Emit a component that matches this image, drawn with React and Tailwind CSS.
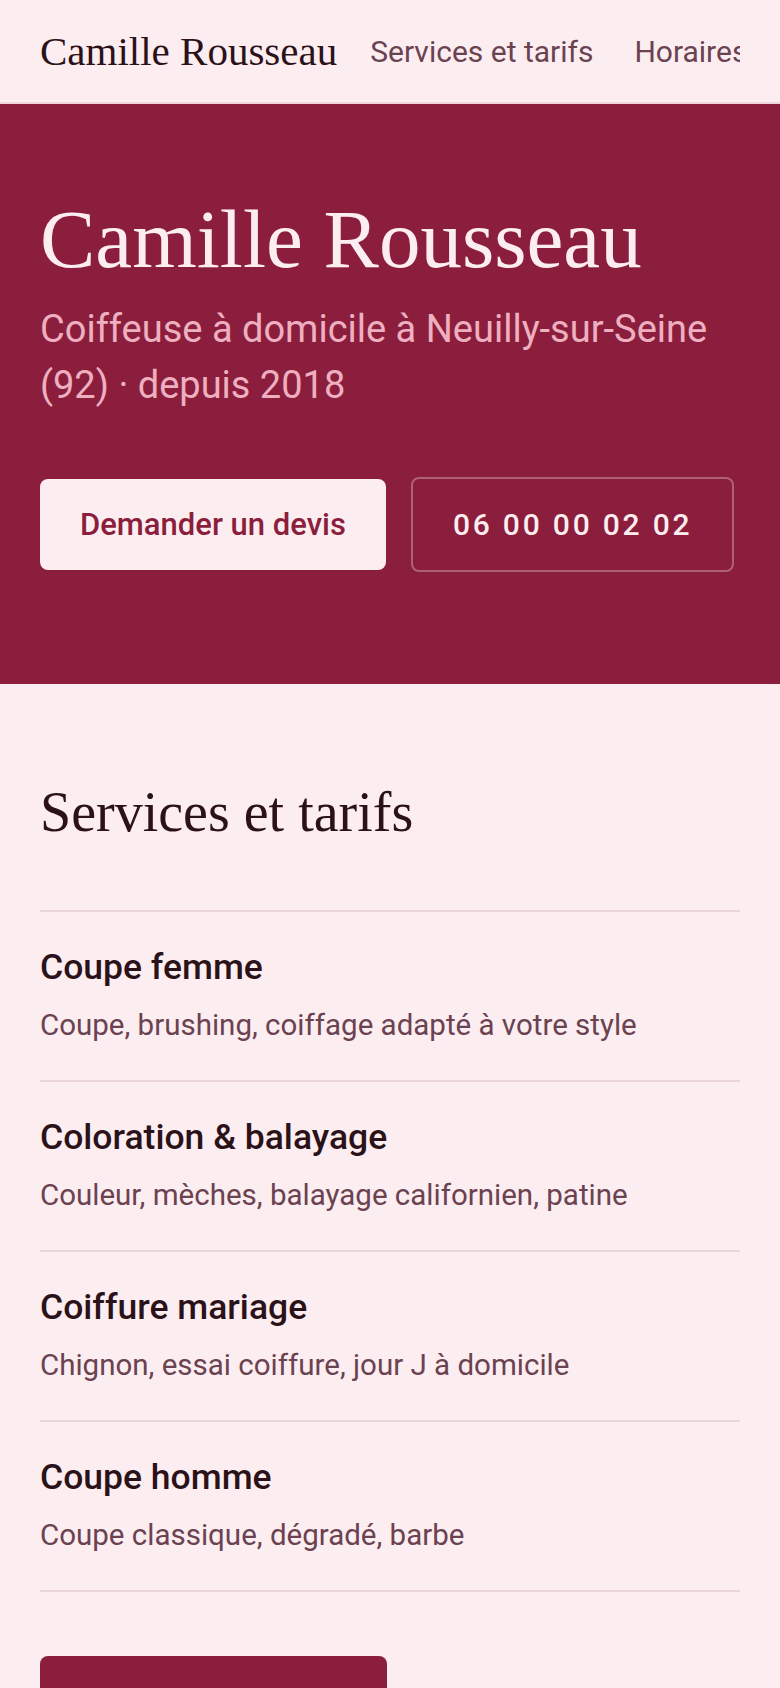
const services = [
  { title: 'Coupe femme', desc: 'Coupe, brushing, coiffage adapté à votre style' },
  { title: 'Coloration & balayage', desc: 'Couleur, mèches, balayage californien, patine' },
  { title: 'Coiffure mariage', desc: 'Chignon, essai coiffure, jour J à domicile' },
  { title: 'Coupe homme', desc: 'Coupe classique, dégradé, barbe' },
];

const serif = "font-['Liberation_Serif',serif]";

export default function App() {
  return (
    <div className="min-h-screen bg-[#fcedf0] font-['Roboto',sans-serif] text-[#2b1219]">
      <nav className="flex h-[104px] items-center gap-[33px] border-b-2 border-[#efd6dc] px-10">
        <span className={`${serif} shrink-0 text-[41px] leading-none text-[#2b1219]`}>
          Camille Rousseau
        </span>
        <div className="flex min-w-0 flex-1 gap-[41px] overflow-hidden whitespace-nowrap text-[30px] text-[#6b4250]">
          <a href="#services">Services et tarifs</a>
          <a href="#horaires">Horaires</a>
        </div>
      </nav>

      <header className="bg-[#8b1e3c] px-10 pt-[94px] pb-[112px]">
        <h1 className={`${serif} text-[83px] leading-none text-[#fcedf0]`}>Camille Rousseau</h1>
        <p className="mt-5 text-[38px] leading-[56px] text-[#eeb0c0]">
          Coiffeuse à domicile à Neuilly-sur-Seine (92) · depuis 2018
        </p>
        <div className="mt-16 flex items-center gap-[25px]">
          <a
            href="#devis"
            className="rounded-lg bg-[#fcedf0] px-10 py-[23px] text-[31px] leading-[45px] font-medium text-[#8b1e3c]"
          >
            Demander un devis
          </a>
          <a
            href="tel:0600000202"
            className="rounded-lg border-2 border-white/30 px-10 py-[23px] text-[30px] leading-[45px] font-medium tracking-[2.8px] text-[#fcedf0]"
          >
            06 00 00 02 02
          </a>
        </div>
      </header>

      <section id="services" className="px-10 pt-[95px] pb-24">
        <h2 className={`${serif} text-[56px] leading-[67px] text-[#2b1219]`}>Services et tarifs</h2>
        <ul className="mt-16 border-b-2 border-[#ecd5da]">
          {services.map((s) => (
            <li key={s.title} className="border-t-2 border-[#ecd5da] pt-[33px] pb-8">
              <h3 className="text-[35.5px] leading-[44px] font-medium text-[#2b1219]">{s.title}</h3>
              <p className="mt-[14px] text-[29.5px] leading-[45px] text-[#6b4250]">{s.desc}</p>
            </li>
          ))}
        </ul>
        <a
          href="#devis"
          className="mt-16 inline-block w-[347px] rounded-lg bg-[#8b1e3c] px-10 py-[23px] text-center text-[31px] leading-[45px] font-medium text-[#fcedf0]"
        >
          Demander un devis
        </a>
      </section>
    </div>
  );
}
